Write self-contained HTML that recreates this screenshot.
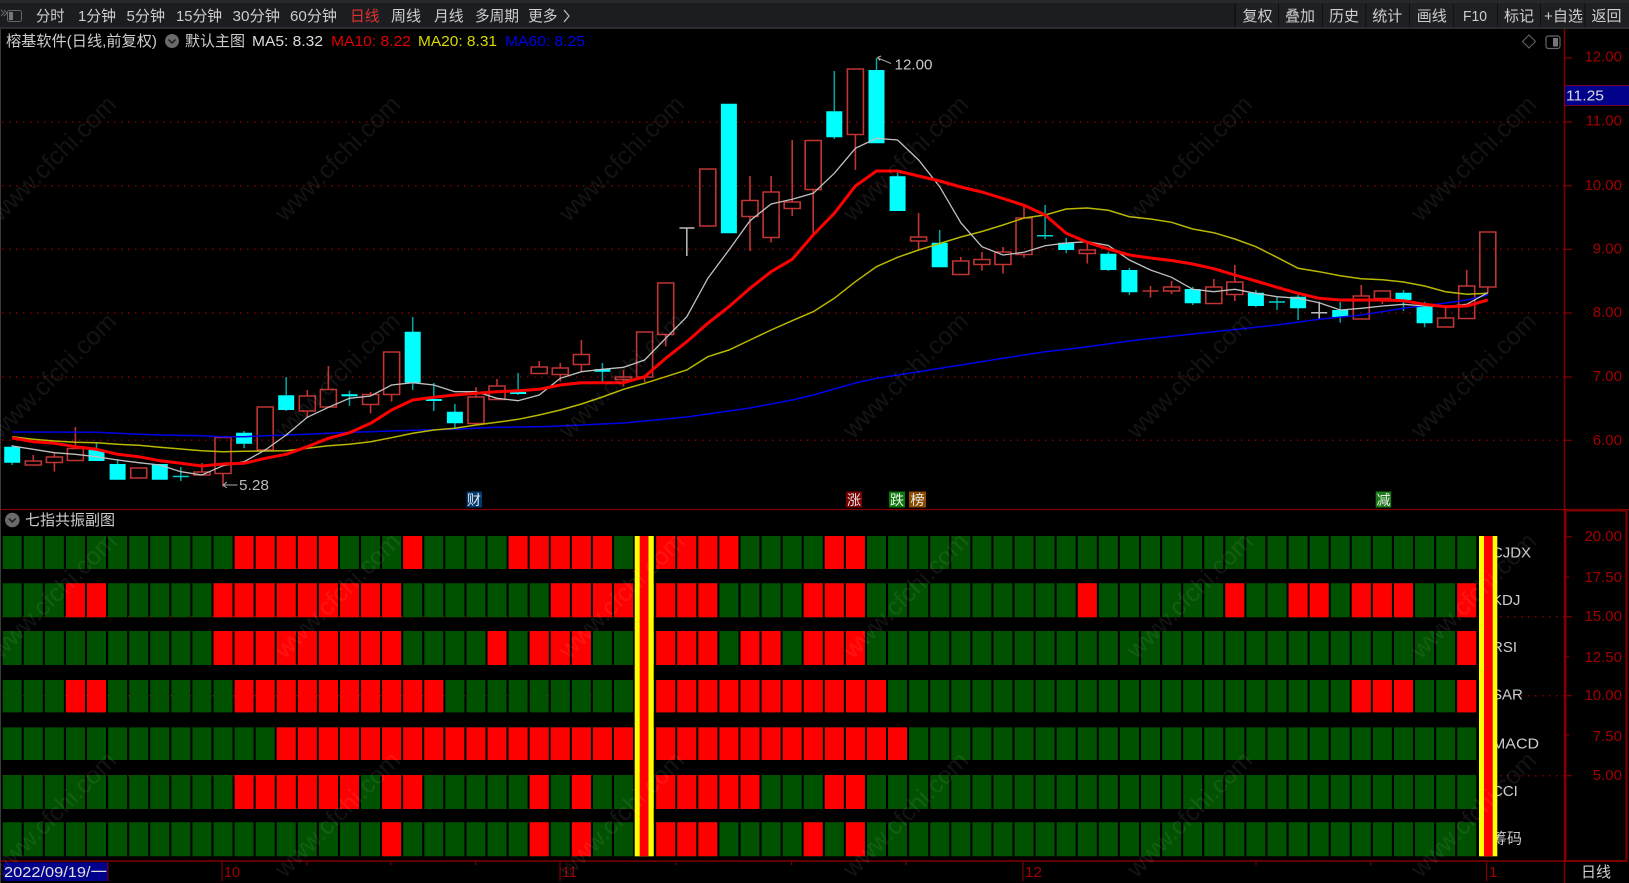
<!DOCTYPE html>
<html lang="zh"><head><meta charset="utf-8"><title>榕基软件</title>
<style>
html,body{margin:0;padding:0;background:#000;width:1629px;height:883px;overflow:hidden}
svg{display:block;filter:blur(.3px)}
text{font-family:"Liberation Sans","Noto Sans CJK SC",sans-serif;font-size:15px}
.t{fill:#cdcdcd}.a{fill:#a00000}
</style></head><body>
<svg width="1629" height="883" viewBox="0 0 1629 883" xmlns="http://www.w3.org/2000/svg">
<rect width="1629" height="883" fill="#000"/>
<!-- toolbar -->
<rect width="1629" height="28" fill="#1c1d20"/>
<rect width="1629" height="3" fill="#27282c"/>
<rect x="1234.5" y="3" width="394.5" height="24" fill="#0f1012"/>
<rect y="27" width="1629" height="2" fill="#2b2c30"/>
<g fill="#1f2023">
<rect x="1236" y="3" width="42" height="24"/><rect x="1279" y="3" width="43" height="24"/><rect x="1323" y="3" width="42.3" height="24"/><rect x="1366.3" y="3" width="42.7" height="24"/><rect x="1410" y="3" width="43.3" height="24"/><rect x="1454" y="3" width="43" height="24"/><rect x="1498" y="3" width="42" height="24"/><rect x="1541" y="3" width="43.3" height="24"/><rect x="1585.3" y="3" width="43.7" height="24"/>
</g>
<path d="M1 10l3 3-3 3M4 10l3 3-3 3" fill="none" stroke="#666" stroke-width="1"/>
<rect x="7.5" y="10.5" width="14" height="11" rx="2" fill="none" stroke="#666"/><rect x="9" y="12" width="4" height="8" fill="#777"/>
<g class="t">
<text x="36" y="21" textLength="28.5" lengthAdjust="spacingAndGlyphs">分时</text>
<text x="78" y="21" textLength="38" lengthAdjust="spacingAndGlyphs">1分钟</text>
<text x="126.5" y="21" textLength="38.5" lengthAdjust="spacingAndGlyphs">5分钟</text>
<text x="176" y="21" textLength="46" lengthAdjust="spacingAndGlyphs">15分钟</text>
<text x="232.5" y="21" textLength="47.5" lengthAdjust="spacingAndGlyphs">30分钟</text>
<text x="290" y="21" textLength="47" lengthAdjust="spacingAndGlyphs">60分钟</text>
<text x="350" y="21" textLength="29.5" lengthAdjust="spacingAndGlyphs" style="fill:#e03030">日线</text>
<text x="391" y="21" textLength="30" lengthAdjust="spacingAndGlyphs">周线</text>
<text x="434" y="21" textLength="29.5" lengthAdjust="spacingAndGlyphs">月线</text>
<text x="475" y="21" textLength="44" lengthAdjust="spacingAndGlyphs">多周期</text>
<text x="528" y="21" textLength="29.5" lengthAdjust="spacingAndGlyphs">更多</text>
</g>
<path d="M564 10l5 6-5 6" fill="none" stroke="#c0c0c0" stroke-width="1.2"/>
<g class="t">
<text x="1242.5" y="21">复权</text><text x="1285" y="21">叠加</text><text x="1329" y="21">历史</text><text x="1372.3" y="21">统计</text><text x="1416.7" y="21">画线</text><text x="1463" y="21" textLength="24" lengthAdjust="spacingAndGlyphs">F10</text><text x="1504" y="21">标记</text><text x="1544" y="21" textLength="39" lengthAdjust="spacingAndGlyphs">+自选</text><text x="1591.5" y="21">返回</text>
</g>
<!-- grid -->
<g stroke="#7c0000" stroke-width="1.5" stroke-dasharray="1.5 5.5" fill="none">
<path d="M2 122H1564M2 185.7H1564M2 249.3H1564M2 313H1564M2 377H1564M2 440.3H1564M2 616.7H1564M2 695.7H1564M2 775.7H1564"/>
</g>
<!-- frame -->
<g stroke="#800000" fill="none">
<path d="M1564.5 29V883" stroke-width="1.5"/>
<path d="M0 509.5H1629" stroke-width="1.2"/>
<path d="M0 861H1565" stroke-width="1.5"/>
<rect x="1565.5" y="510.5" width="61" height="350.5" stroke-width="2"/>
</g>
<path d="M0.5 29V883" stroke="#3a3a3a"/>
<!-- info line -->
<text class="t" x="6" y="46" textLength="151" lengthAdjust="spacingAndGlyphs">榕基软件(日线,前复权)</text>
<circle cx="172" cy="41" r="7" fill="#6a6a6a"/><path d="M168.5 39.5l3.5 3.5 3.5-3.5" fill="none" stroke="#1c1c1c" stroke-width="1.5"/>
<text class="t" x="185" y="46">默认主图</text>
<text x="252" y="46" fill="#dcdcdc" textLength="71" lengthAdjust="spacingAndGlyphs">MA5: 8.32</text>
<text x="331" y="46" fill="#e00000" textLength="80" lengthAdjust="spacingAndGlyphs">MA10: 8.22</text>
<text x="418" y="46" fill="#d8d800" textLength="79" lengthAdjust="spacingAndGlyphs">MA20: 8.31</text>
<text x="505" y="46" fill="#0000e8" textLength="80" lengthAdjust="spacingAndGlyphs">MA60: 8.25</text>
<path d="M1529 35l6.5 6.5-6.5 6.5-6.5-6.5z" fill="none" stroke="#666"/>
<rect x="1546" y="36" width="14" height="12.5" rx="2.5" fill="none" stroke="#666" stroke-width="1.2"/><rect x="1553" y="38" width="5" height="8.5" fill="#777"/>
<!-- price axis -->
<g class="a" text-anchor="end">
<text x="1622" y="61.5">12.00</text><text x="1622" y="125.5">11.00</text><text x="1622" y="190">10.00</text><text x="1622" y="253.5">9.00</text><text x="1622" y="317">8.00</text><text x="1622" y="381">7.00</text><text x="1622" y="445">6.00</text>
<text x="1622" y="541">20.00</text><text x="1622" y="582">17.50</text><text x="1622" y="621">15.00</text><text x="1622" y="662">12.50</text><text x="1622" y="700">10.00</text><text x="1622" y="741">7.50</text><text x="1622" y="780">5.00</text>
</g>
<path d="M1565 58h7M1565 122h7M1565 185.7h7M1565 249.3h7M1565 313h7M1565 377h7M1565 440.3h7M1566 536.7h6M1566 577h3M1566 616.7h6M1566 656.7h3M1566 695.7h6M1566 735h3M1566 775.7h6" stroke="#800000" stroke-width="1.2"/>
<rect x="1565" y="85.5" width="64" height="20" fill="#00008b"/><path d="M1565 85.5H1629M1565 105.5H1629" stroke="#7a0030"/>
<text x="1566" y="100.5" fill="#dcdcdc" textLength="38" lengthAdjust="spacingAndGlyphs">11.25</text>
<!-- indicator rows -->
<circle cx="12.3" cy="520" r="7.3" fill="#6a6a6a"/><path d="M8.8 518.5l3.5 3.5 3.5-3.5" fill="none" stroke="#1c1c1c" stroke-width="1.5"/>
<text class="t" x="25" y="525">七指共振副图</text>
<g class="t">
<text x="1492" y="557.5" textLength="39" lengthAdjust="spacingAndGlyphs">CJDX</text>
<text x="1492" y="605">KDJ</text>
<text x="1492" y="652">RSI</text>
<text x="1492" y="699.5">SAR</text>
<text x="1492" y="748.5" textLength="47" lengthAdjust="spacingAndGlyphs">MACD</text>
<text x="1492" y="796">CCI</text>
<text x="1492" y="843.5">筹码</text>
</g>
<g fill="none" stroke-dasharray="19 2.08">
<g stroke="#005200">
<path stroke-width="33" d="M2.7 552.5H1476.3"/><path stroke-width="34" d="M2.7 600.3H1476.3"/><path stroke-width="34" d="M2.7 648H1476.3"/><path stroke-width="32.3" d="M2.7 696.2H1476.3"/><path stroke-width="32.7" d="M2.7 743.7H1476.3"/><path stroke-width="34" d="M2.7 792H1476.3"/><path stroke-width="34" d="M2.7 839.3H1476.3"/>
</g>
<g stroke="#f00">
<path stroke-width="33" d="M234.6 552.5h103.32M403.2 552.5h19M508.6 552.5h103.32M656.2 552.5h82.24M824.8 552.5h40.08"/>
<path stroke-width="34" d="M65.9 600.3h40.08M213.5 600.3h187.64M550.8 600.3h82.24M656.2 600.3h61.16M803.7 600.3h61.16M1077.8 600.3h19M1225.3 600.3h19M1288.6 600.3h40.08M1351.8 600.3h61.16M1457.2 600.3h19"/>
<path stroke-width="34" d="M213.5 648h187.64M487.5 648h19M529.7 648h61.16M656.2 648h61.16M740.5 648h40.08M803.7 648h61.16M1457.2 648h19"/>
<path stroke-width="32.3" d="M65.9 696.2h40.08M234.6 696.2h208.72M656.2 696.2h229.8M1351.8 696.2h61.16M1457.2 696.2h19"/>
<path stroke-width="32.7" d="M276.7 743.7h356.28M656.2 743.7h250.88"/>
<path stroke-width="34" d="M234.6 792h124.4M382.1 792h40.08M529.7 792h19M571.9 792h19M656.2 792h103.32M824.8 792h40.08"/>
<path stroke-width="34" d="M382.1 839.3h19M529.7 839.3h19M571.9 839.3h19M656.2 839.3h61.16M803.7 839.3h19M845.9 839.3h19"/>
</g>
</g>
<rect x="634.7" y="536" width="19" height="320.3" fill="#ff0"/><rect x="639.7" y="536" width="8.8" height="320.3" fill="#f00"/>
<rect x="1479" y="536" width="18.3" height="320.3" fill="#ff0"/><rect x="1484" y="536" width="8.7" height="320.3" fill="#f00"/>
<!-- candles -->
<path fill="none" stroke="#00a8a8" stroke-width="1.5" d="M12.2 445v2M12.2 462.7v2.3M96.5 443v7M117.6 459v5M180.8 467v14M244.1 431v2M244.1 443.7v4.6M286.2 377v18M286.2 410v1M349.5 390.7v15.3M412.7 317v15M412.7 382v8M433.8 383v28M454.9 404v8M454.9 423v5M518.1 373v22M602.4 363v19M834.3 71v40M834.3 137v2M876.5 58v12M897.6 171.7v5M939.7 230v13M1045.1 205v34M1066.2 237.7v5M1066.2 250v3.3M1108.4 251.7v2M1108.4 270v1M1129.4 268v2M1129.4 292v3M1192.7 286.7v2.3M1192.7 303v2M1255.9 290v3M1255.9 306v1.3M1277 296.7v13.3M1298.1 295v2M1298.1 308v12M1340.2 302v8M1340.2 317v5.7M1403.5 290v3M1403.5 300v11M1424.6 301.7v5M1424.6 323v4.3"/>
<path fill="#0ff" d="M4.2 446.7h16v16h-16zM88.5 450h16v11h-16zM109.6 464h16v15.7h-16zM151.8 464h16v15.7h-16zM236.1 432.7h16v11h-16zM278.2 395.3h16v14.7h-16zM341.5 394.3h16v2h-16zM404.7 331.7h16v51h-16zM425.8 399h16v2h-16zM446.9 411.7h16v11.6h-16zM510.1 392h16v2h-16zM594.4 369.3h16v2.5h-16zM720.9 103.7h16v129.6h-16zM826.3 111.3h16v26h-16zM868.5 70h16v73.3h-16zM889.6 176.3h16v34.7h-16zM931.7 242.7h16v24.6h-16zM1058.2 242.7h16v7.3h-16zM1100.4 253.7h16v16.3h-16zM1121.4 270h16v22.3h-16zM1184.7 289h16v14.3h-16zM1247.9 292.7h16v13.3h-16zM1290.1 296.7h16v11.6h-16zM1332.2 310h16v7h-16zM1395.5 292.7h16v7.3h-16zM1416.6 306.7h16v16.6h-16z"/>
<path fill="none" stroke="#00d0d0" stroke-width="1.5" d="M172.8 476.5h16M1037.1 235.7h16M1269 302h16"/>
<path fill="none" stroke="#c03434" stroke-width="1.6" d="M25.3 461h16v4h-16zM33.3 455v6M46.4 457h16v5.5h-16zM54.4 453v4M54.4 462.5v9M67.4 448.5h16v12h-16zM75.4 427v21.5M130.7 468h16v10h-16zM193.9 472h16v3h-16zM201.9 463v9M215 437.5h16v36h-16zM223 473.5v13M257.2 407h16v43h-16zM299.3 396h16v15h-16zM307.3 390v6M307.3 411v7M320.4 389.5h16v17.5h-16zM328.4 366v23.5M362.6 394.5h16v10h-16zM370.6 392v2.5M370.6 404.5v9M383.6 352h16v42.5h-16zM391.6 394.5v7M468 397h16v26.5h-16zM476 387v10M489 386h16v13.5h-16zM497 379v7M531.2 367h16v6.5h-16zM539.2 361v6M552.3 368h16v6.5h-16zM560.3 363v5M560.3 374.5v7M573.4 354.5h16v10h-16zM581.4 340v14.5M581.4 364.5v8M615.5 377h16v2.5h-16zM623.5 370v7M623.5 379.5v7M636.6 332h16v45h-16zM644.6 377v5M657.7 283h16v51.5h-16zM665.7 334.5v12M699.8 169h16v57h-16zM742 200.5h16v16h-16zM750 176v24.5M750 216.5v34.5M763.1 192h16v45.5h-16zM771.1 176v16M771.1 237.5v5M784.2 202h16v6.5h-16zM792.2 140v62M792.2 208.5v7.5M805.2 140.5h16v49h-16zM813.2 189.5v44.5M847.4 69h16v65.5h-16zM855.4 134.5v35.5M910.6 237h16v4h-16zM918.6 213v24M918.6 241v9M952.8 261h16v13.5h-16zM960.8 257v4M973.9 259.5h16v5h-16zM981.9 252v7.5M981.9 264.5v6M995 252h16v12.5h-16zM1003 247v5M1003 264.5v9M1016 218h16v36.5h-16zM1024 205v13M1024 254.5v3M1079.3 250h16v3.5h-16zM1087.3 243v7M1087.3 253.5v10M1142.5 291h16M1150.5 286v11.5M1163.6 287h16v4h-16zM1171.6 281v6M1171.6 291v3M1205.8 287h16v16.5h-16zM1213.8 279v8M1226.8 282h16v12.5h-16zM1234.8 265v17M1234.8 294.5v6.5M1353.3 296h16v23h-16zM1361.3 285v11M1374.4 291h16v7.5h-16zM1382.4 298.5v5.5M1437.6 318h16v9h-16zM1445.6 308v10M1458.7 286h16v32.5h-16zM1466.7 270v16M1479.8 232h16v55h-16zM1487.8 287v6"/>
<path fill="none" stroke="#bdbdbd" stroke-width="1.5" d="M679.5 228h15M686.8 228v28M1311.2 312.7h16M1319.2 301.7v17.3"/>
<!-- MA lines -->
<polyline fill="none" stroke="#0000e8" stroke-width="1.5" points="12.2,432 96.5,432.3 117.6,433.3 138.7,434.3 159.8,435 201.9,435.7 223,436.7 244.1,436.7 265.2,435.7 286.2,435 307.3,434.3 328.4,433.3 349.5,432.3 370.6,431.7 391.6,431 412.7,430.3 433.8,429.7 454.9,429.3 476,428.3 497,427.3 518.1,427 539.2,426.7 560.3,426 581.4,425 602.4,424 623.5,423 644.6,421 665.7,419 686.8,417 707.8,414 728.9,411 750,408 771.1,404 792.2,400 813.2,395 834.3,389 855.4,383 876.5,378.3 918.6,371.7 960.8,365 1003,358.3 1045.1,351.7 1080,347.7 1137,340 1213.8,331.7 1277,325 1319.2,319.3 1361.3,315 1403.5,308.3 1445.6,303 1466.7,300 1487.8,295"/>
<polyline fill="none" stroke="#b8b800" stroke-width="1.5" points="12.2,436.7 33.3,439.3 54.4,441 75.4,442.3 96.5,442.7 117.6,444.3 138.7,445.3 159.8,447.3 180.8,449 201.9,450.7 223,451.7 244.1,451.3 265.2,451 286.2,450.7 307.3,448.3 328.4,445.7 349.5,444.3 370.6,441.7 391.6,437.7 412.7,433.3 433.8,430 454.9,428.3 476,425 497,422.3 518.1,419.3 539.2,415 560.3,410 581.4,404 602.4,397 623.5,389.3 644.6,383.3 665.7,376.7 686.8,370 707.8,356.7 728.9,350 750,340 771.1,330 792.2,320.7 813.2,311.7 834.3,298.3 855.4,281.7 876.5,266.7 897.6,257.3 918.6,250 939.7,243.5 960.8,237 981.9,231.5 1003,225 1024,218 1045.1,215 1066.2,209 1087.3,208 1108.4,210.3 1129.4,216.7 1150.5,219 1171.6,222.3 1192.7,229 1213.8,232.7 1234.8,239 1255.9,246.7 1277,257.3 1298.1,268.3 1319.2,271.7 1340.2,275.7 1361.3,278.7 1382.4,279.7 1403.5,282 1424.6,286 1445.6,291.7 1466.7,294.3 1487.8,293.3"/>
<polyline fill="none" stroke="#c0c0c0" stroke-width="1.3" points="12.2,446 33.3,449.3 54.4,452.7 75.4,454.3 96.5,456.7 117.6,460 138.7,462.7 159.8,465 180.8,471.7 201.9,475 223,465.7 244.1,461.7 265.2,450 286.2,435 307.3,417.3 328.4,407.3 349.5,398.3 370.6,396 391.6,385 412.7,382.7 433.8,385 454.9,391.7 476,391.7 497,398.3 518.1,400.7 539.2,395 560.3,378.3 581.4,371.7 602.4,369.3 623.5,367.3 644.6,360 665.7,338.3 686.8,316.7 707.8,278.3 728.9,250 750,220.7 771.1,204 792.2,199.3 813.2,193.3 834.3,173.3 855.4,148.3 876.5,138.3 897.6,140 918.6,160 939.7,186.7 960.8,222.7 981.9,246.7 1003,255 1024,252.3 1045.1,245.7 1066.2,243 1087.3,241.7 1108.4,245.5 1129.4,260 1150.5,270 1171.6,277.3 1192.7,289.3 1213.8,291.7 1234.8,289.3 1255.9,293.3 1277,296.7 1298.1,298.3 1319.2,302.7 1340.2,310 1361.3,308.3 1382.4,306 1403.5,304.3 1424.6,306 1445.6,306.7 1466.7,304.3 1487.8,292.7"/>
<polyline fill="none" stroke="#f00" stroke-width="3" stroke-linejoin="round" points="12.2,438 33.3,441.7 54.4,443.3 75.4,446.7 96.5,449.3 117.6,454.3 138.7,456.7 159.8,460.7 180.8,463.3 201.9,466 223,464 244.1,463.3 265.2,458.3 286.2,454.3 307.3,446.7 328.4,438.3 349.5,432.7 370.6,423.3 391.6,410 412.7,400 433.8,397.3 454.9,395 476,393.3 497,391.7 518.1,390.7 539.2,389.3 560.3,385 581.4,382.7 602.4,382.7 623.5,382.7 644.6,376.7 665.7,358.3 686.8,341.7 707.8,323.3 728.9,306.7 750,288.3 771.1,271.7 792.2,259.3 813.2,235 834.3,213.3 855.4,186 876.5,171 897.6,171 918.6,176 939.7,181 960.8,187 981.9,192 1003,198.5 1024,205.3 1045.1,215 1066.2,233.3 1087.3,242.3 1108.4,249 1129.4,255 1150.5,258 1171.6,260.5 1192.7,264 1213.8,268.7 1234.8,275 1255.9,281 1277,287.3 1298.1,293.3 1319.2,298.3 1340.2,300 1361.3,300 1382.4,300 1403.5,300.7 1424.6,304.3 1445.6,306.7 1466.7,306 1487.8,300"/>
<!-- annotations -->
<path d="M237.5 485H223M227 482l-4 3 4 3" fill="none" stroke="#aaa" stroke-width="1"/>
<text x="239" y="490" fill="#b8b8b8" textLength="30" lengthAdjust="spacingAndGlyphs">5.28</text>
<path d="M891 63.5L878 58M881 56l-3.5 1.5 2.5 3" fill="none" stroke="#aaa" stroke-width="1"/>
<text x="894.5" y="69.5" fill="#c8c8c8" textLength="38" lengthAdjust="spacingAndGlyphs">12.00</text>
<!-- markers -->
<rect x="466.6" y="491.5" width="15.4" height="16" fill="#003a70"/><text x="467" y="505" fill="#e8e8e8" style="font-size:14px">财</text>
<rect x="846" y="491.5" width="16" height="16" fill="#7a0000"/><text x="847" y="505" fill="#e8e8e8" style="font-size:14px">涨</text>
<rect x="889" y="491.5" width="16" height="16" fill="#0a7a0a"/><text x="890" y="505" fill="#f0f0f0" style="font-size:14px">跌</text>
<rect x="909" y="491.5" width="17" height="16" fill="#8a4a00"/><text x="910.5" y="505" fill="#e8e8e8" style="font-size:14px">榜</text>
<rect x="1375.7" y="491.5" width="15.5" height="16" fill="#1a7a1a"/><text x="1376.5" y="505" fill="#e8e8e8" style="font-size:14px">减</text>
<!-- time axis -->
<rect x="3.5" y="862.3" width="104.5" height="18.7" fill="#00008b"/><path d="M108 862v19" stroke="#800000"/>
<text x="4" y="877" fill="#e0e0e0" textLength="103" lengthAdjust="spacingAndGlyphs">2022/09/19/一</text>
<path d="M222 862v19M560 862v19M1023 862v19M1486.7 862v19M307 862v3M390.6 862v3M475.6 862v3M676 862v3M791.5 862v3M906 862v3M1256 862v3M1370.7 862v3" stroke="#800000" stroke-width="1.2"/>
<text class="a" x="224" y="877" textLength="16" lengthAdjust="spacingAndGlyphs">10</text><text class="a" x="562" y="877" textLength="15" lengthAdjust="spacingAndGlyphs">11</text><text class="a" x="1025" y="877" textLength="17" lengthAdjust="spacingAndGlyphs">12</text><text class="a" x="1489" y="877">1</text>
<text class="t" x="1581" y="877">日线</text>
<!-- watermark -->
<g fill="#fff" fill-opacity=".075" text-anchor="middle">
<text x="53" y="167" transform="rotate(-45 53 158)" style="font-size:25px">www.cfchi.com</text><text x="337" y="167" transform="rotate(-45 337 158)" style="font-size:25px">www.cfchi.com</text><text x="621" y="167" transform="rotate(-45 621 158)" style="font-size:25px">www.cfchi.com</text><text x="905" y="167" transform="rotate(-45 905 158)" style="font-size:25px">www.cfchi.com</text><text x="1189" y="167" transform="rotate(-45 1189 158)" style="font-size:25px">www.cfchi.com</text><text x="1473" y="167" transform="rotate(-45 1473 158)" style="font-size:25px">www.cfchi.com</text>
<text x="53" y="384" transform="rotate(-45 53 375)" style="font-size:25px">www.cfchi.com</text><text x="337" y="384" transform="rotate(-45 337 375)" style="font-size:25px">www.cfchi.com</text><text x="621" y="384" transform="rotate(-45 621 375)" style="font-size:25px">www.cfchi.com</text><text x="905" y="384" transform="rotate(-45 905 375)" style="font-size:25px">www.cfchi.com</text><text x="1189" y="384" transform="rotate(-45 1189 375)" style="font-size:25px">www.cfchi.com</text><text x="1473" y="384" transform="rotate(-45 1473 375)" style="font-size:25px">www.cfchi.com</text>
<text x="53" y="604" transform="rotate(-45 53 595)" style="font-size:25px">www.cfchi.com</text><text x="337" y="604" transform="rotate(-45 337 595)" style="font-size:25px">www.cfchi.com</text><text x="621" y="604" transform="rotate(-45 621 595)" style="font-size:25px">www.cfchi.com</text><text x="905" y="604" transform="rotate(-45 905 595)" style="font-size:25px">www.cfchi.com</text><text x="1189" y="604" transform="rotate(-45 1189 595)" style="font-size:25px">www.cfchi.com</text><text x="1473" y="604" transform="rotate(-45 1473 595)" style="font-size:25px">www.cfchi.com</text>
<text x="53" y="823" transform="rotate(-45 53 814)" style="font-size:25px">www.cfchi.com</text><text x="337" y="823" transform="rotate(-45 337 814)" style="font-size:25px">www.cfchi.com</text><text x="621" y="823" transform="rotate(-45 621 814)" style="font-size:25px">www.cfchi.com</text><text x="905" y="823" transform="rotate(-45 905 814)" style="font-size:25px">www.cfchi.com</text><text x="1189" y="823" transform="rotate(-45 1189 814)" style="font-size:25px">www.cfchi.com</text><text x="1473" y="823" transform="rotate(-45 1473 814)" style="font-size:25px">www.cfchi.com</text>
</g>
</svg>
</body></html>
